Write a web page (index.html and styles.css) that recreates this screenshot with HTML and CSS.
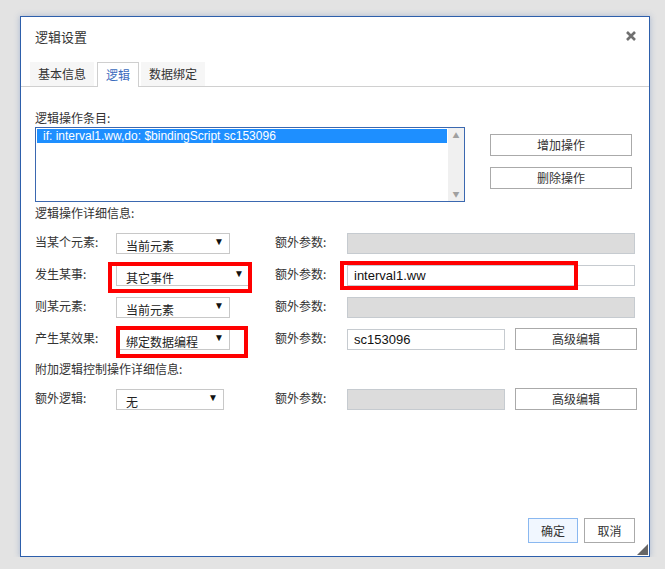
FILE: index.html
```html
<!DOCTYPE html>
<html lang="zh">
<head>
  <meta charset="UTF-8" />
  <title>逻辑设置</title>
  <link rel="stylesheet" href="styles.css">
</head>
<body>
  <div class="dialogo">
    <div class="cabecera">
      <span class="titulo">逻辑设置</span>
      <span class="cerrar">
        <svg width="10" height="10" viewBox="0 0 10 10"><path d="M1 1 L9 9 M9 1 L1 9" stroke="#707070" stroke-width="2.6"/></svg>
      </span>
    </div>

    <div class="pestanas">
      <div class="pestana">基本信息</div>
      <div class="pestana activa">逻辑</div>
      <div class="pestana">数据绑定</div>
    </div>

    <div class="contenido">
      <div class="seccion">逻辑操作条目:</div>
      <div class="lista-fila">
        <div class="lista">
          <div class="lista-items">
            <div class="item sel">if: interval1.ww,do: $bindingScript sc153096</div>
          </div>
          <div class="scroll">
            <span class="flecha">▲</span>
            <span class="flecha">▼</span>
          </div>
        </div>
        <div class="acciones">
          <button class="boton">增加操作</button>
          <button class="boton">删除操作</button>
        </div>
      </div>

      <div class="seccion sub">逻辑操作详细信息:</div>

      <div class="fila">
        <span class="etiqueta">当某个元素:</span>
        <div class="celda"><div class="selector w114">当前元素<span class="tri">▼</span></div></div>
        <span class="etiqueta">额外参数:</span>
        <div class="entrada gris w288"></div>
      </div>

      <div class="fila">
        <span class="etiqueta">发生某事:</span>
        <div class="celda">
          <div class="selector w134">其它事件<span class="tri">▼</span></div>
          <div class="marca m1"></div>
        </div>
        <span class="etiqueta">额外参数:</span>
        <div class="celda">
          <div class="entrada w288">interval1.ww</div>
          <div class="marca m2"></div>
        </div>
      </div>

      <div class="fila">
        <span class="etiqueta">则某元素:</span>
        <div class="celda"><div class="selector w114">当前元素<span class="tri">▼</span></div></div>
        <span class="etiqueta">额外参数:</span>
        <div class="entrada gris w288"></div>
      </div>

      <div class="fila">
        <span class="etiqueta">产生某效果:</span>
        <div class="celda">
          <div class="selector w114">绑定数据编程<span class="tri">▼</span></div>
          <div class="marca m3"></div>
        </div>
        <span class="etiqueta">额外参数:</span>
        <div class="celda par">
          <div class="entrada w158">sc153096</div>
          <button class="boton avanzado">高级编辑</button>
        </div>
      </div>

      <div class="seccion sub2">附加逻辑控制操作详细信息:</div>

      <div class="fila">
        <span class="etiqueta">额外逻辑:</span>
        <div class="celda"><div class="selector w108">无<span class="tri">▼</span></div></div>
        <span class="etiqueta">额外参数:</span>
        <div class="celda par">
          <div class="entrada gris w158"></div>
          <button class="boton avanzado">高级编辑</button>
        </div>
      </div>
    </div>

    <div class="pie">
      <button class="boton ok">确定</button>
      <button class="boton cancelar">取消</button>
    </div>
    <div class="agarre"></div>
  </div>
</body>
</html>
```

FILE: styles.css
```css
body {
  font-family: "Noto Sans CJK SC", "Liberation Sans", sans-serif;
  background-color: #e3e3e3;
  margin: 0;
  padding: 16px 0 0 20px;
  font-size: 12px;
  color: #333;
}
.dialogo {
  position: relative;
  width: 628px;
  height: 539px;
  background: white;
  border: 1px solid #2d5fab;
  box-shadow: 0 0 6px rgba(60, 100, 170, 0.35);
  display: flex;
  flex-direction: column;
}
.cabecera {
  display: flex;
  align-items: center;
  justify-content: space-between;
  height: 20px;
  padding: 10px 13px 15px 14px;
}
.titulo {
  font-size: 13px;
  line-height: 20px;
  color: #333;
}
.cerrar {
  display: flex;
  margin-top: -3px;
}
.pestanas {
  display: flex;
  padding-left: 9px;
  border-bottom: 1px solid #d0d0d0;
  height: 24px;
}
.pestana {
  padding: 0 8px;
  line-height: 24px;
  background: #f6f6f6;
  margin-right: 3px;
  color: #333;
}
.pestana.activa {
  background: white;
  border: 1px solid #cfcfcf;
  border-bottom: none;
  line-height: 24px;
  height: 24px;
  padding: 0 8px;
  margin-right: 2px;
  color: #3b6bbd;
}
.contenido {
  padding: 23px 0 0 14px;
}
.seccion {
  line-height: 16px;
  height: 16px;
}
.seccion.sub {
  margin-top: 3px;
}
.seccion.sub2 {
  margin-top: 11px;
}
.lista-fila {
  display: flex;
  margin-top: 1px;
}
.lista {
  width: 428px;
  height: 73px;
  border: 1px solid #3b68b0;
  display: flex;
}
.lista-items {
  flex: 1;
  padding: 1px 1px 0 1px;
}
.item {
  font-family: "Liberation Sans", sans-serif;
  font-size: 12px;
  line-height: 14px;
  padding-left: 6px;
}
.item.sel {
  background: #1e8fff;
  color: white;
}
.scroll {
  width: 16px;
  background: #f0f0f0;
  display: flex;
  flex-direction: column;
  justify-content: space-between;
  align-items: center;
  padding: 3px 0;
}
.flecha {
  font-size: 7px;
  color: #a0a0a0;
  line-height: 8px;
}
.acciones {
  display: flex;
  flex-direction: column;
  gap: 11px;
  margin: 7px 0 0 25px;
}
.boton {
  font-family: "Noto Sans CJK SC", sans-serif;
  font-size: 12px;
  color: #333;
  background: white;
  border: 1px solid #aaa;
  padding: 0;
  height: 22px;
  width: 142px;
  line-height: 20px;
}
.fila {
  display: grid;
  grid-template-columns: 81px 159px 72px 290px;
  align-items: center;
  height: 22px;
  margin-top: 10px;
}
.seccion.sub + .fila,
.seccion.sub2 + .fila {
  margin-top: 11px;
}
.etiqueta {
  line-height: 16px;
  margin-top: -2px;
}
.celda {
  position: relative;
  display: flex;
  align-items: center;
}
.celda.par {
  gap: 10px;
}
.selector {
  box-sizing: border-box;
  height: 21px;
  border: 1px solid #c8c8c8;
  padding-left: 9px;
  line-height: 20px;
  font-size: 12px;
  color: #222;
  display: flex;
  justify-content: space-between;
  padding-right: 5px;
  padding-top: 2px;
}
.tri {
  font-family: "Liberation Sans", sans-serif;
  font-size: 10px;
  color: #111;
  line-height: 14px;
  margin-top: -1px;
}
.w114 { width: 114px; }
.w134 { width: 134px; }
.w108 { width: 108px; }
.w288 { width: 288px; }
.w158 { width: 158px; }
.entrada {
  box-sizing: border-box;
  height: 21px;
  border: 1px solid #c6cbd0;
  font-family: "Liberation Sans", sans-serif;
  font-size: 13px;
  line-height: 19px;
  padding-left: 6px;
  color: #111;
  background: white;
}
.entrada.gris {
  background: #dcdcdc;
}
.boton.avanzado {
  width: 122px;
  height: 22px;
}
.marca {
  position: absolute;
  border: 4px solid #f00;
  box-sizing: border-box;
}
.m1 {
  left: -8px;
  top: -3px;
  width: 144px;
  height: 31px;
}
.m2 {
  left: -7px;
  top: -4px;
  width: 238px;
  height: 29px;
}
.m3 {
  left: 0;
  top: -3px;
  width: 132px;
  height: 32px;
}
.pie {
  margin-top: auto;
  display: flex;
  justify-content: flex-end;
  gap: 6px;
  padding: 0 14px 13px 0;
}
.boton.ok {
  width: 50px;
  height: 25px;
  background: #f1f7ff;
  border-color: #8ab8f0;
}
.boton.cancelar {
  width: 51px;
  height: 25px;
}
.agarre {
  position: absolute;
  right: 1px;
  bottom: 1px;
  width: 0;
  height: 0;
  border-left: 11px solid transparent;
  border-bottom: 11px solid #666;
}
```
